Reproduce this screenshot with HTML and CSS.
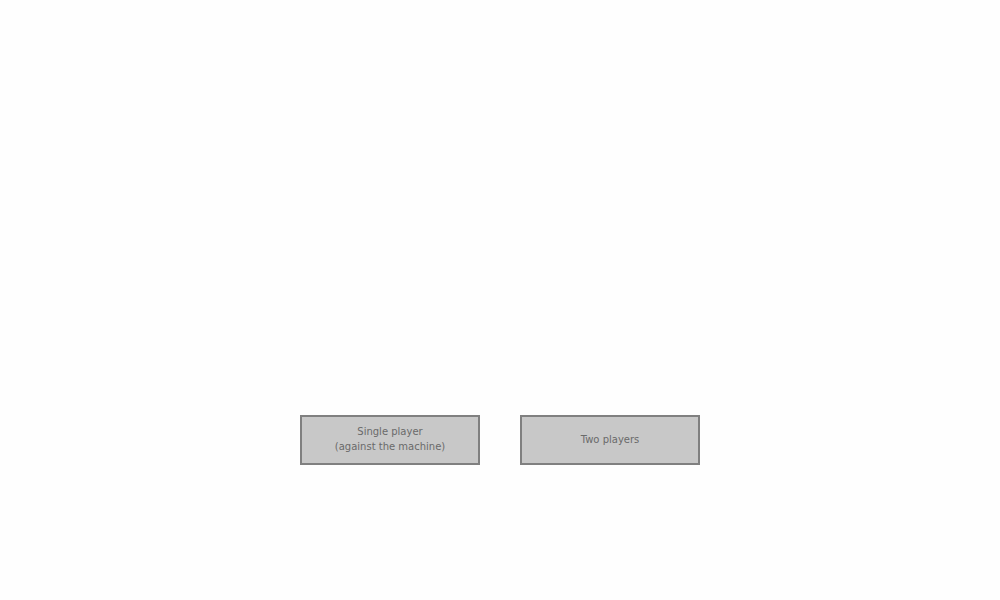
FILE: index.html
```html
<!DOCTYPE html>
<html>
<head>
<meta charset="utf-8">
<link rel="stylesheet" href="styles.css">
</head>
<body>
<div class="screen">
  <div class="menu">
    <button class="btn">Single player<br>(against the machine)</button>
    <button class="btn">Two players</button>
  </div>
</div>
</body>
</html>
```
FILE: styles.css
```css
html, body {
  margin: 0;
  padding: 0;
  background: #fefefe;
}
.screen {
  width: 1000px;
  height: 600px;
  display: flex;
  flex-direction: column;
  align-items: center;
  padding-top: 415px;
  box-sizing: border-box;
}
.menu {
  display: flex;
  gap: 40px;
}
.btn {
  width: 180px;
  height: 50px;
  box-sizing: border-box;
  border: 2px solid #808080;
  background: #c8c8c8;
  color: #6a6a6a;
  font-family: "DejaVu Sans", sans-serif;
  font-size: 10px;
  line-height: 15px;
  letter-spacing: 0;
  padding: 0 0 2px 0;
  margin: 0;
  text-align: center;
}
```
